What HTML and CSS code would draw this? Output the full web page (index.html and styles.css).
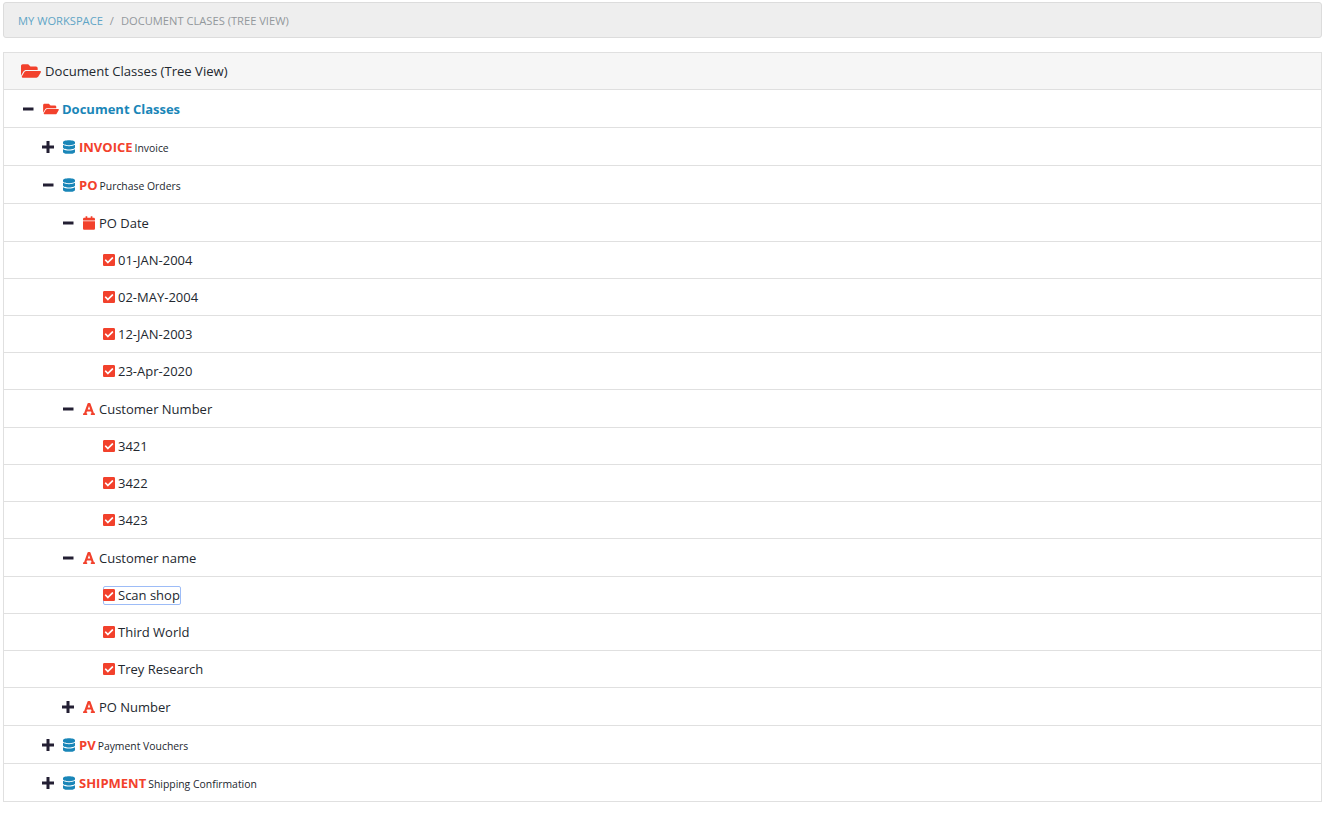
FILE: index.html
```html
<!DOCTYPE html>
<html lang="en">
<head>
<meta charset="utf-8">
<title>Document Classes (Tree View)</title>
<link rel="stylesheet" href="styles.css">
</head>
<body>
<svg class="defs" width="0" height="0" aria-hidden="true">
  <symbol id="i-folder" viewBox="0 0 576 512"><path d="M572.694 292.093L500.27 416.248A63.997 63.997 0 0 1 444.989 448H45.025c-18.523 0-30.064-20.093-20.731-36.093l72.424-124.155A64 64 0 0 1 152 256h399.964c18.523 0 30.064 20.093 20.73 36.093zM152 224h328v-48c0-26.51-21.49-48-48-48H272l-64-64H48C21.49 64 0 85.49 0 112v278.046l69.077-118.418C86.214 242.25 117.989 224 152 224z"/></symbol>
  <symbol id="i-db" viewBox="0 0 448 512"><path d="M448 73.143v45.714C448 159.143 347.667 192 224 192S0 159.143 0 118.857V73.143C0 32.857 100.333 0 224 0s224 32.857 224 73.143zM448 176v102.857C448 319.143 347.667 352 224 352S0 319.143 0 278.857V176c48.125 33.143 136.208 48.572 224 48.572S399.874 209.143 448 176zm0 160v102.857C448 479.143 347.667 512 224 512S0 479.143 0 438.857V336c48.125 33.143 136.208 48.572 224 48.572S399.874 369.143 448 336z"/></symbol>
  <symbol id="i-cal" viewBox="0 0 448 512"><path d="M12 192h424c6.6 0 12 5.4 12 12v260c0 26.5-21.5 48-48 48H48c-26.5 0-48-21.5-48-48V204c0-6.6 5.4-12 12-12zm436-44v-36c0-26.5-21.5-48-48-48h-48V12c0-6.6-5.4-12-12-12h-40c-6.6 0-12 5.4-12 12v52H160V12c0-6.6-5.4-12-12-12h-40c-6.6 0-12 5.4-12 12v52H48C21.5 64 0 85.5 0 112v36c0 6.6 5.4 12 12 12h424c6.6 0 12-5.4 12-12z"/></symbol>
  <symbol id="i-check" viewBox="0 0 448 512"><path d="M400 480H48c-26.51 0-48-21.49-48-48V80c0-26.51 21.49-48 48-48h352c26.51 0 48 21.49 48 48v352c0 26.51-21.49 48-48 48zm-204.686-98.059l184-184c6.248-6.248 6.248-16.379 0-22.627l-22.627-22.627c-6.248-6.248-16.379-6.249-22.628 0L184 302.745l-69.059-69.059c-6.248-6.248-16.379-6.248-22.628 0L69.686 256.314c-6.248 6.248-6.248 16.379 0 22.627l104 104c6.249 6.25 16.379 6.25 22.628.001z"/></symbol>
  <symbol id="i-font" viewBox="0 0 448 512"><path d="M432 416h-23.41L277.88 53.69A32 32 0 0 0 247.58 32h-47.16a32 32 0 0 0-30.3 21.69L39.41 416H16a16 16 0 0 0-16 16v32a16 16 0 0 0 16 16h128a16 16 0 0 0 16-16v-32a16 16 0 0 0-16-16h-19.6l23.3-64h152.6l23.3 64H304a16 16 0 0 0-16 16v32a16 16 0 0 0 16 16h128a16 16 0 0 0 16-16v-32a16 16 0 0 0-16-16zM176.85 272L224 142.51 271.15 272z"/></symbol>
  <symbol id="i-plus" viewBox="0 0 12 12"><path d="M4.5 0h3v4.5H12v3H7.5V12h-3V7.5H0v-3h4.5z"/></symbol>
  <symbol id="i-minus" viewBox="0 0 12 12"><path d="M1 4.5h10.5v3H1z"/></symbol>
</svg>

<nav class="crumbs"><a class="crumb-link">MY WORKSPACE</a><span class="crumb-sep">/</span><span>DOCUMENT CLASES (TREE VIEW)</span></nav>

<section class="panel">
  <header class="panel-head"><svg class="ic ic-head red"><use href="#i-folder"/></svg>Document Classes (Tree View)</header>
  <ul class="tree">
    <li class="row node l0"><svg class="tg"><use href="#i-minus"/></svg><svg class="ic ic-folder red"><use href="#i-folder"/></svg><b class="root">Document Classes</b></li>
    <li class="row node l1"><svg class="tg"><use href="#i-plus"/></svg><svg class="ic ic-db blue"><use href="#i-db"/></svg><b class="cls">INVOICE</b><small>Invoice</small></li>
    <li class="row node l1"><svg class="tg"><use href="#i-minus"/></svg><svg class="ic ic-db blue"><use href="#i-db"/></svg><b class="cls">PO</b><small>Purchase Orders</small></li>
    <li class="row node l2"><svg class="tg"><use href="#i-minus"/></svg><svg class="ic ic-db red"><use href="#i-cal"/></svg><span>PO Date</span></li>
    <li class="row leaf"><svg class="ic ic-check red"><use href="#i-check"/></svg><span>01-JAN-2004</span></li>
    <li class="row leaf"><svg class="ic ic-check red"><use href="#i-check"/></svg><span>02-MAY-2004</span></li>
    <li class="row leaf"><svg class="ic ic-check red"><use href="#i-check"/></svg><span>12-JAN-2003</span></li>
    <li class="row leaf"><svg class="ic ic-check red"><use href="#i-check"/></svg><span>23-Apr-2020</span></li>
    <li class="row node l2"><svg class="tg"><use href="#i-minus"/></svg><svg class="ic ic-db red"><use href="#i-font"/></svg><span>Customer Number</span></li>
    <li class="row leaf"><svg class="ic ic-check red"><use href="#i-check"/></svg><span>3421</span></li>
    <li class="row leaf"><svg class="ic ic-check red"><use href="#i-check"/></svg><span>3422</span></li>
    <li class="row leaf"><svg class="ic ic-check red"><use href="#i-check"/></svg><span>3423</span></li>
    <li class="row node l2"><svg class="tg"><use href="#i-minus"/></svg><svg class="ic ic-db red"><use href="#i-font"/></svg><span>Customer name</span></li>
    <li class="row leaf"><span class="focus"><svg class="ic ic-check red"><use href="#i-check"/></svg><span>Scan shop</span></span></li>
    <li class="row leaf"><svg class="ic ic-check red"><use href="#i-check"/></svg><span>Third World</span></li>
    <li class="row leaf"><svg class="ic ic-check red"><use href="#i-check"/></svg><span>Trey Research</span></li>
    <li class="row node l2"><svg class="tg"><use href="#i-plus"/></svg><svg class="ic ic-db red"><use href="#i-font"/></svg><span>PO Number</span></li>
    <li class="row node l1"><svg class="tg"><use href="#i-plus"/></svg><svg class="ic ic-db blue"><use href="#i-db"/></svg><b class="cls">PV</b><small>Payment Vouchers</small></li>
    <li class="row node l1"><svg class="tg"><use href="#i-plus"/></svg><svg class="ic ic-db blue"><use href="#i-db"/></svg><b class="cls">SHIPMENT</b><small>Shipping Confirmation</small></li>
  </ul>
</section>
</body>
</html>
```

FILE: styles.css
```css
* { box-sizing: border-box; }

html, body { margin: 0; padding: 0; background: #fff; }

body {
  padding: 2px 1px 0 3px;
  font-family: "Open Sans", "Liberation Sans", sans-serif;
  font-size: 13px;
  color: #23282f;
}

.defs { position: absolute; }

.crumbs {
  display: flex;
  align-items: center;
  height: 36px;
  padding: 0 14px;
  background: #eee;
  border: 1px solid #dcdcdc;
  border-radius: 3px;
  font-size: 11.15px;
  color: #93989c;
}

.crumb-link { color: #5fa5c6; }
.crumb-sep { margin: 0 7px; }

.panel {
  margin-top: 14px;
  border: 1px solid #e0e0e0;
  border-bottom-width: 0;
}

.panel-head {
  display: flex;
  align-items: center;
  height: 37px;
  padding-left: 17px;
  background: #f6f6f6;
  border-bottom: 1px solid #dfdfdf;
  font-size: 13.1px;
}

.tree { list-style: none; margin: 0; padding: 0; }

.row {
  display: flex;
  align-items: center;
  border-bottom: 1px solid #e0e0e0;
}

.node { height: 38px; }
.leaf { height: 37px; padding-left: 99px; }
.l0 { padding-left: 18px; }
.l1 { padding-left: 38px; }
.l2 { padding-left: 58px; }

.tg { width: 12px; height: 12px; flex: none; margin-right: 9px; fill: #231f33; }

.ic { flex: none; }
.red { fill: #f2412c; }
.blue { fill: #1a86b8; }

.ic-head { width: 20px; height: 18px; margin-right: 4px; }
.ic-folder { width: 16px; height: 14px; margin-right: 3px; }
.ic-db { width: 12px; height: 14px; margin-right: 4px; }
.ic-check { width: 12px; height: 14px; margin-right: 3px; }

.root { color: #1a86b8; font-weight: 700; }
.cls { color: #f2412c; font-weight: 700; }

small { font-size: 10.4px; margin-left: 2px; padding-top: 2px; }

.focus {
  display: inline-flex;
  align-items: center;
  height: 19px;
  border: 1px solid #9dbcf7;
  border-radius: 2px;
}

.focus .ic-check { margin-left: -1px; }
```
